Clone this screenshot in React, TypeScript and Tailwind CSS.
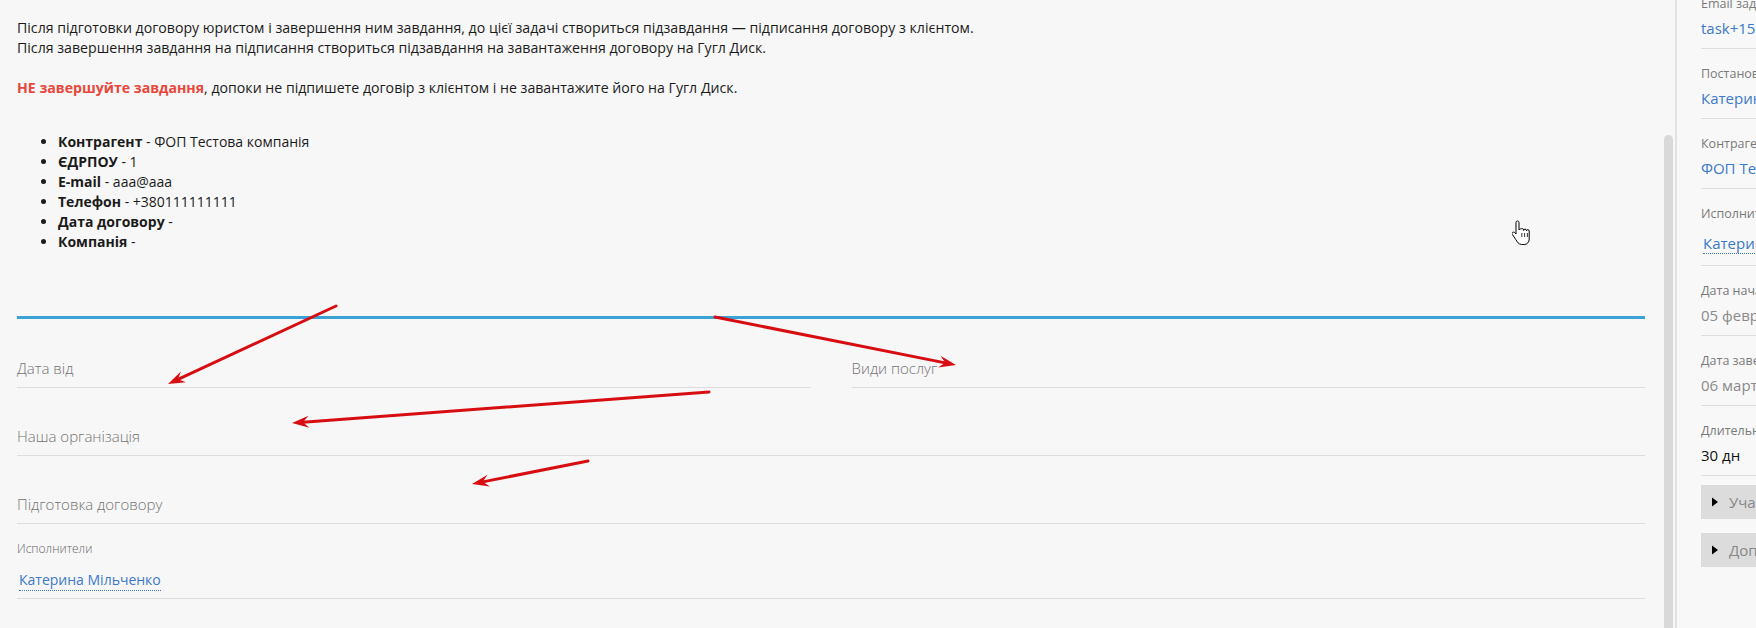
import React from "react";

type Arrow = [number, number, number, number];

const arrows: Arrow[] = [
  [336, 306, 168, 384],
  [715, 317, 956, 365],
  [709, 392, 292, 423],
  [588, 461, 472, 484],
];

function ArrowShape({ a }: { a: Arrow }) {
  const [x1, y1, x2, y2] = a;
  const dx = x2 - x1;
  const dy = y2 - y1;
  const len = Math.hypot(dx, dy);
  const ux = dx / len;
  const uy = dy / len;
  const px = -uy;
  const py = ux;
  const head = 17;
  const w = 6;
  const notch = 11;
  const bx = x2 - ux * head;
  const by = y2 - uy * head;
  const nx = x2 - ux * notch;
  const ny = y2 - uy * notch;
  const pts = [
    [x2, y2],
    [bx + px * w, by + py * w],
    [nx, ny],
    [bx - px * w, by - py * w],
  ]
    .map((p) => p.join(","))
    .join(" ");
  return (
    <g>
      <line x1={x1} y1={y1} x2={nx} y2={ny} stroke="#d70d12" strokeWidth={3} strokeLinecap="round" />
      <polygon points={pts} fill="#d70d12" />
    </g>
  );
}

function Field({ label }: { label: string }) {
  return (
    <div className="flex h-[68px] items-end border-b border-[#dddddd] pb-[9px]">
      <span className="text-[15px] leading-[20px] font-light text-[#737373]">{label}</span>
    </div>
  );
}

function SideItem({
  label,
  value,
  tone,
  dotted,
}: {
  label: string;
  value: string;
  tone: "blue" | "gray" | "black";
  dotted?: boolean;
}) {
  const color =
    tone === "blue" ? "text-[#3b79c9]" : tone === "gray" ? "text-[#8a8a8a]" : "text-[#111111]";
  return (
    <div className="border-b border-[#dddddd] pt-[17px] pb-[10px]">
      <div className="text-[12.5px] leading-[16px] text-[#7a7a7a]">{label}</div>
      {dotted ? (
        <div className="mt-[9px] pl-[2px]">
          <span className={`inline-block border-b border-dotted border-[#3b79c9] text-[15px] leading-[20px] ${color}`}>
            {value}
          </span>
        </div>
      ) : (
        <div className={`mt-[6px] text-[15px] leading-[20px] ${color}`}>{value}</div>
      )}
    </div>
  );
}

function Collapse({ label }: { label: string }) {
  return (
    <div className="flex h-[34px] items-center bg-[#dcdcdc] pl-[10px]">
      <svg width="8" height="10" viewBox="0 0 8 10" className="mr-[10px]">
        <polygon points="1,0.5 7,5 1,9.5" fill="#000" />
      </svg>
      <span className="text-[15px] leading-[20px] text-[#888888]">{label}</span>
    </div>
  );
}

export default function App() {
  return (
    <div className="relative flex h-[628px] w-[1756px] overflow-hidden bg-[#f7f7f7] font-['Open_Sans','Noto_Sans',sans-serif] text-[#1b1b1b]">
      {/* main column */}
      <div className="w-[1662px] shrink-0 pl-[17px] pr-[17px] pt-[18px]">
        <div className="text-[14.15px] leading-[20px]">
          <p>
            Після підготовки договору юристом і завершення ним завдання, до цієї задачі створиться підзавдання — підписання договору з клієнтом.
            <br />
            Після завершення завдання на підписання створиться підзавдання на завантаження договору на Гугл Диск.
          </p>
          <p className="mt-[20px]">
            <span className="font-bold text-[#e8473c]">НЕ завершуйте завдання</span>, допоки не підпишете договір з клієнтом і не завантажите його на Гугл Диск.
          </p>
        </div>
        <ul className="mt-[34px] list-disc pl-[41px] text-[14px] leading-[20px]">
          <li>
            <b>Контрагент</b> - ФОП Тестова компанія
          </li>
          <li>
            <b>ЄДРПОУ</b> - 1
          </li>
          <li>
            <b>E-mail</b> - aaa@aaa
          </li>
          <li>
            <b>Телефон</b> - +380111111111
          </li>
          <li>
            <b>Дата договору</b> -
          </li>
          <li>
            <b>Компанія</b> -
          </li>
        </ul>
        <div className="mt-[64px] h-[3px] bg-[#3aa3d3]" />
        <div className="mt-[1px] grid grid-cols-2 gap-x-[41px]">
          <Field label="Дата від" />
          <Field label="Види послуг" />
        </div>
        <Field label="Наша організація" />
        <Field label="Підготовка договору" />
        <div className="h-[75px] border-b border-[#dddddd] pt-[17px]">
          <div className="text-[12px] leading-[16px] font-light text-[#666666]">Исполнители</div>
          <div className="mt-[10px] pl-[2px]">
            <span className="inline-block border-b border-dotted border-[#3b79c9] text-[14px] leading-[20px] text-[#3b79c9]">
              Катерина Мільченко
            </span>
          </div>
        </div>
      </div>

      {/* scrollbar */}
      <div className="w-[13px] shrink-0">
        <div className="ml-[2px] mt-[135px] h-[600px] w-[9px] rounded-full bg-[#d9d9d9]" />
      </div>

      {/* sidebar */}
      <div className="flex-1 border-l-2 border-[#e2e2e2] bg-[#f8f8f8] pl-[24px]">
        <div className="-mt-[21px] w-[300px] whitespace-nowrap">
          <SideItem label="Email задачи" value="task+1512@bitrix.ua" tone="blue" />
          <SideItem label="Постановщик" value="Катерина Мільченко" tone="blue" />
          <SideItem label="Контрагент" value="ФОП Тестова компанія" tone="blue" />
          <SideItem label="Исполнители" value="Катерина Мільченко" tone="blue" dotted />
          <SideItem label="Дата начала" value="05 февраля 2024" tone="gray" />
          <SideItem label="Дата завершения" value="06 марта 2024" tone="gray" />
          <SideItem label="Длительность" value="30 дн" tone="black" />
          <div className="mt-[9px] flex flex-col gap-[14px]">
            <Collapse label="Участники" />
            <Collapse label="Дополнительно" />
          </div>
        </div>
      </div>

      {/* annotation arrows */}
      <svg className="pointer-events-none absolute left-0 top-0" width="1756" height="628">
        {arrows.map((a, i) => (
          <ArrowShape key={i} a={a} />
        ))}
      </svg>

      {/* mouse cursor */}
      <svg className="pointer-events-none absolute left-[1512px] top-[220px]" width="19" height="26" viewBox="0 0 19 26">
        <path
          d="M5.5 1c-1 0-1.5.7-1.5 1.5V14l-1.3-1.4c-.7-.7-1.8-.7-2.3 0-.5.6-.4 1.4 0 2l3.5 5c1.2 2 2.6 4.9 5.8 4.9h2.5c3 0 5-2.3 5-5.5V11c0-.8-.6-1.4-1.4-1.4s-1.4.6-1.4 1.4v-.5c0-.8-.6-1.4-1.4-1.4s-1.4.6-1.4 1.4V10c0-.8-.6-1.4-1.4-1.4S7 9.2 7 10V2.5C7 1.7 6.5 1 5.5 1z"
          fill="#fff"
          stroke="#000"
          strokeWidth="1"
        />
        <path d="M9.8 13v4M12.6 13v4M15.4 13v4" stroke="#000" strokeWidth="0.8" />
      </svg>
    </div>
  );
}
